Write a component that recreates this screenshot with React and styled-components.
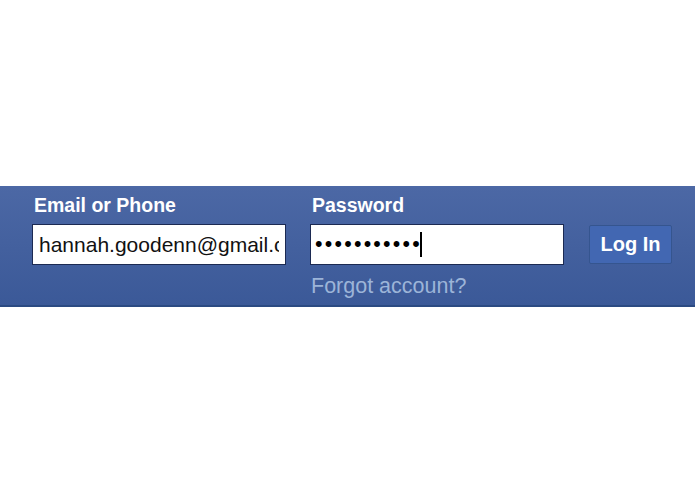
import React from "react";
import styled, { createGlobalStyle } from "styled-components";

const Global = createGlobalStyle`
  html, body { margin: 0; padding: 0; background: #ffffff; }
  body { font-family: "Liberation Sans", Arial, Helvetica, sans-serif; }
`;

const Page = styled.div`
  width: 695px;
  height: 494px;
  padding-top: 186px;
  box-sizing: border-box;
  background: #ffffff;
`;

const Bar = styled.header`
  background: linear-gradient(#4c68a5, #3b5998);
  border-bottom: 2px solid #2b4a82;
  padding: 8px 0 7px 32px;
  display: grid;
  grid-template-columns: 254px 254px 83px;
  column-gap: 24px;
  align-items: center;
`;

const Label = styled.label`
  display: block;
  color: #ffffff;
  font-weight: bold;
  font-size: 19.5px;
  line-height: 22px;
  padding-left: 2px;
  margin-bottom: 8px;
  white-space: nowrap;
`;

const fieldBase = `
  box-sizing: border-box;
  height: 41px;
  width: 254px;
  margin: 0;
  background: #ffffff;
  border: 1px solid #1c2a52;
  border-radius: 0;
  padding: 0 6px;
  font-family: "Liberation Sans", Arial, sans-serif;
  font-size: 21px;
  color: #111111;
  outline: none;
`;

const TextInput = styled.input`
  ${fieldBase}
`;

const Field = styled.div`
  ${fieldBase}
  display: flex;
  align-items: center;
  overflow: hidden;
  white-space: nowrap;
`;

const Dots = styled.span`
  font-size: 21.5px;
  letter-spacing: 2.2px;
  color: #000;
  margin-left: -2px;
`;

const Caret = styled.span`
  display: inline-block;
  width: 1.5px;
  height: 25px;
  background: #000;
  margin-left: -2px;
`;

const Button = styled.button`
  box-sizing: border-box;
  height: 39px;
  width: 83px;
  margin-left: 1px;
  background: #4267b2;
  border: 1px solid #35558f;
  border-radius: 2px;
  color: #ffffff;
  font-family: "Liberation Sans", Arial, sans-serif;
  font-weight: bold;
  font-size: 20px;
  padding: 0;
  cursor: pointer;
`;

const Forgot = styled.a`
  display: block;
  color: #9cb4d8;
  font-size: 21.5px;
  line-height: 24px;
  padding-left: 1px;
  margin-top: 9px;
  text-decoration: none;
  white-space: nowrap;
`;

const Empty = styled.div``;

export default function App() {
  return (
    <Page>
      <Global />
      <Bar>
        <Label htmlFor="email">Email or Phone</Label>
        <Label>Password</Label>
        <Empty />
        <TextInput id="email" type="text" readOnly value="hannah.goodenn@gmail.com" />
        <Field>
          <Dots>•••••••••••</Dots>
          <Caret />
        </Field>
        <Button>Log In</Button>
        <Empty />
        <Forgot href="#">Forgot account?</Forgot>
        <Empty />
      </Bar>
    </Page>
  );
}
